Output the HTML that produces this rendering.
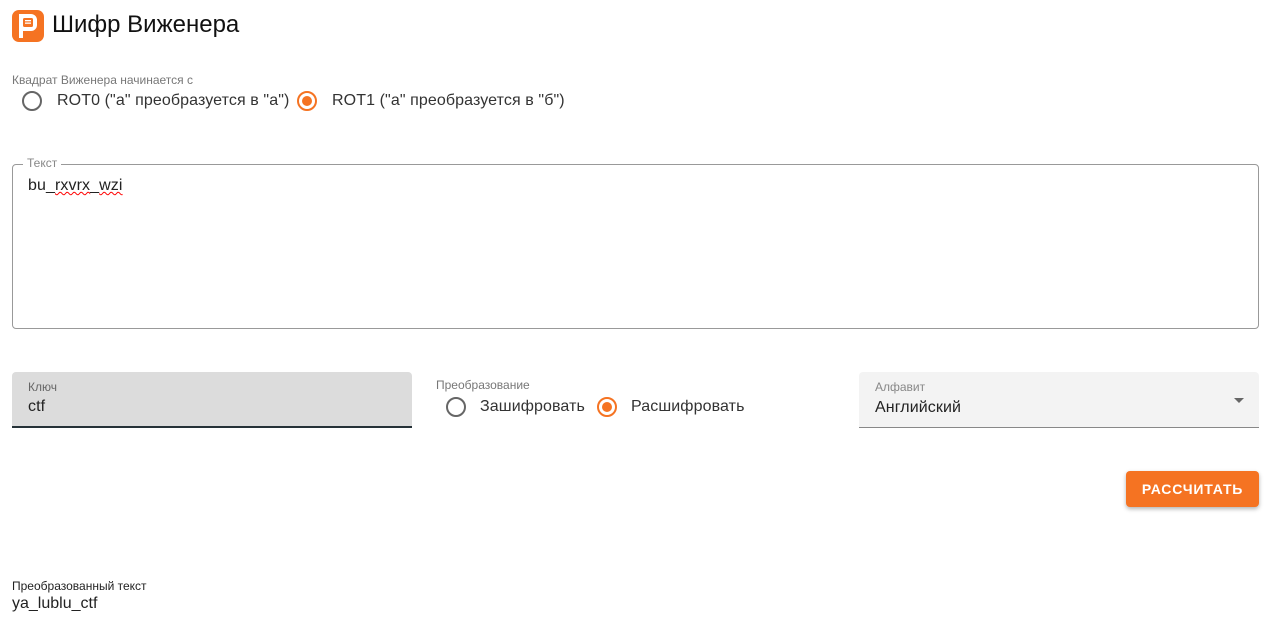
<!DOCTYPE html>
<html><head><meta charset="utf-8"><style>
*{box-sizing:border-box;margin:0;padding:0}
body{width:1266px;height:623px;background:#fff;font-family:"Liberation Sans",sans-serif;color:#222;position:relative;overflow:hidden}
.a{position:absolute;white-space:nowrap}
.r{position:absolute;width:20px;height:20px;border:2px solid #666;border-radius:50%}
.r.on{border-color:#f57322}
.r.on::after{content:"";position:absolute;left:3px;top:3px;width:10px;height:10px;border-radius:50%;background:#f57322}
.l{font-size:16px;color:#333;letter-spacing:0.1px}
.s{font-size:12px;color:#777}
</style></head><body>
<div class="a" style="left:12px;top:10px;width:32px;height:32px;background:#f57322;border-radius:7px"></div>
<svg class="a" style="left:12px;top:10px" width="32" height="32" viewBox="0 0 32 32"><path d="M7 28V4h12a6 6 0 0 1 6 6v5a6 6 0 0 1-6 6h-8v7z" fill="#fff"/><rect x="11" y="8" width="10" height="9" rx="1.5" fill="#f57322"/><rect x="13" y="10" width="6" height="1.3" fill="#fff"/><rect x="13" y="12.5" width="6" height="1.3" fill="#fff"/></svg>
<div class="a" style="left:52px;top:11px;font-size:24px;color:#111">Шифр Виженера</div>
<div class="a s" style="left:12px;top:73px">Квадрат Виженера начинается с</div>
<div class="r" style="left:22px;top:91px"></div>
<div class="a l" style="left:57px;top:92px">ROT0 ("а" преобразуется в "а")</div>
<div class="r on" style="left:297px;top:91px"></div>
<div class="a l" style="left:332px;top:92px">ROT1 ("а" преобразуется в "б")</div>
<div class="a" style="left:12px;top:164px;width:1247px;height:165px;border:1px solid #999;border-radius:4px"></div>
<div class="a s" style="left:23px;top:156px;background:#fff;padding:0 4px;font-size:12px;color:#888">Текст</div>
<div class="a l" style="left:28px;top:177px;color:#222">bu_<span style="text-decoration:underline wavy red;text-decoration-thickness:1px">rxvrx</span>_<span style="text-decoration:underline wavy red;text-decoration-thickness:1px">wzi</span></div>
<div class="a" style="left:12px;top:372px;width:400px;height:56px;background:#dcdcdc;border-radius:4px 4px 0 0;border-bottom:2px solid #263238"></div>
<div class="a s" style="left:28px;top:380px;color:#666">Ключ</div>
<div class="a l" style="left:28px;top:398px;color:#222">ctf</div>
<div class="a s" style="left:436px;top:378px">Преобразование</div>
<div class="r" style="left:446px;top:397px"></div>
<div class="a l" style="left:480px;top:398px">Зашифровать</div>
<div class="r on" style="left:597px;top:397px"></div>
<div class="a l" style="left:631px;top:398px">Расшифровать</div>
<div class="a" style="left:859px;top:372px;width:400px;height:56px;background:#f3f3f3;border-radius:4px 4px 0 0;border-bottom:1px solid #888"></div>
<div class="a s" style="left:875px;top:380px;color:#888">Алфавит</div>
<div class="a l" style="left:875px;top:399px;color:#222">Английский</div>
<div class="a" style="left:1234px;top:398px;border-left:5px solid transparent;border-right:5px solid transparent;border-top:5px solid #666"></div>
<div class="a" style="left:1126px;top:471px;width:133px;height:36px;background:#f57322;border-radius:4px;box-shadow:0 2px 4px rgba(0,0,0,.3);color:#fff;font-weight:bold;font-size:14px;text-align:center;line-height:36px;letter-spacing:0.8px">РАССЧИТАТЬ</div>
<div class="a" style="left:12px;top:579px;font-size:12px;color:#222">Преобразованный текст</div>
<div class="a" style="left:12px;top:595px;font-size:16px;color:#222">ya_lublu_ctf</div>
</body></html>
